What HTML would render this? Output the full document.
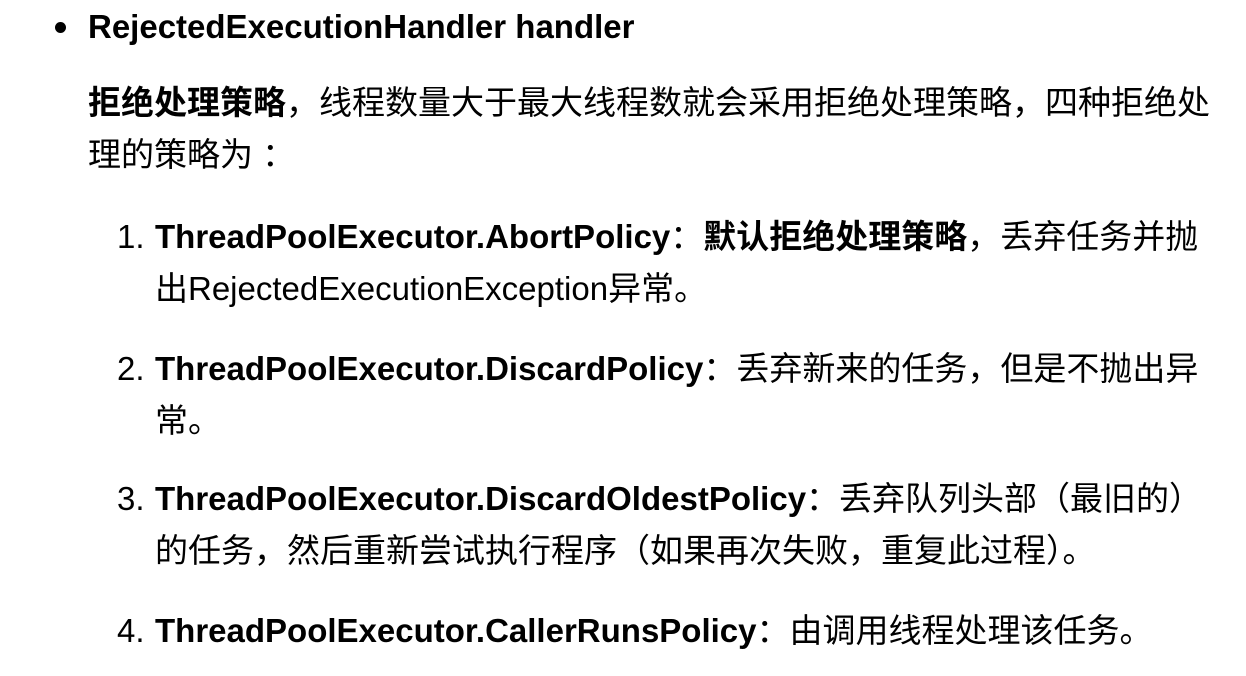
<!DOCTYPE html>
<html><head><meta charset="utf-8"><style>
html,body{margin:0;padding:0;background:#fff;width:1246px;height:676px;overflow:hidden}
body{font-family:"Liberation Sans","Noto Sans CJK SC",sans-serif;font-size:33px;color:#000;letter-spacing:0;line-height:52px;white-space:nowrap}
.l{letter-spacing:0}
.abs{position:absolute}
b{font-weight:bold}
.dot{position:absolute;left:55px;top:22px;width:11px;height:11px;border-radius:50%;background:#000}
</style></head><body>
<div class="dot"></div>
<div class="abs" style="left:88px;top:1px"><b class="l">RejectedExecutionHandler handler</b></div>
<div class="abs" style="left:88px;top:77px"><b>拒绝处理策略</b>，线程数量大于最大线程数就会采用拒绝处理策略，四种拒绝处</div>
<div class="abs" style="left:88px;top:129px">理的策略为 ：</div>

<div class="abs l" style="left:117px;top:211px">1.</div>
<div class="abs" style="left:155px;top:211px"><b class="l">ThreadPoolExecutor.AbortPolicy</b>：<b>默认拒绝处理策略</b>，丢弃任务并抛</div>
<div class="abs" style="left:155px;top:263px">出<span class="l">RejectedExecutionException</span>异常。</div>

<div class="abs l" style="left:117px;top:343px">2.</div>
<div class="abs" style="left:155px;top:343px"><b class="l">ThreadPoolExecutor.DiscardPolicy</b>：丢弃新来的任务，但是不抛出异</div>
<div class="abs" style="left:155px;top:395px">常。</div>

<div class="abs l" style="left:117px;top:473px">3.</div>
<div class="abs" style="left:155px;top:473px"><b class="l">ThreadPoolExecutor.DiscardOldestPolicy</b>：丢弃队列头部（最旧的）</div>
<div class="abs" style="left:155px;top:525px">的任务，然后重新尝试执行程序（如果再次失败，重复此过程）。</div>

<div class="abs l" style="left:117px;top:605px">4.</div>
<div class="abs" style="left:155px;top:605px"><b class="l">ThreadPoolExecutor.CallerRunsPolicy</b>：由调用线程处理该任务。</div>
</body></html>
